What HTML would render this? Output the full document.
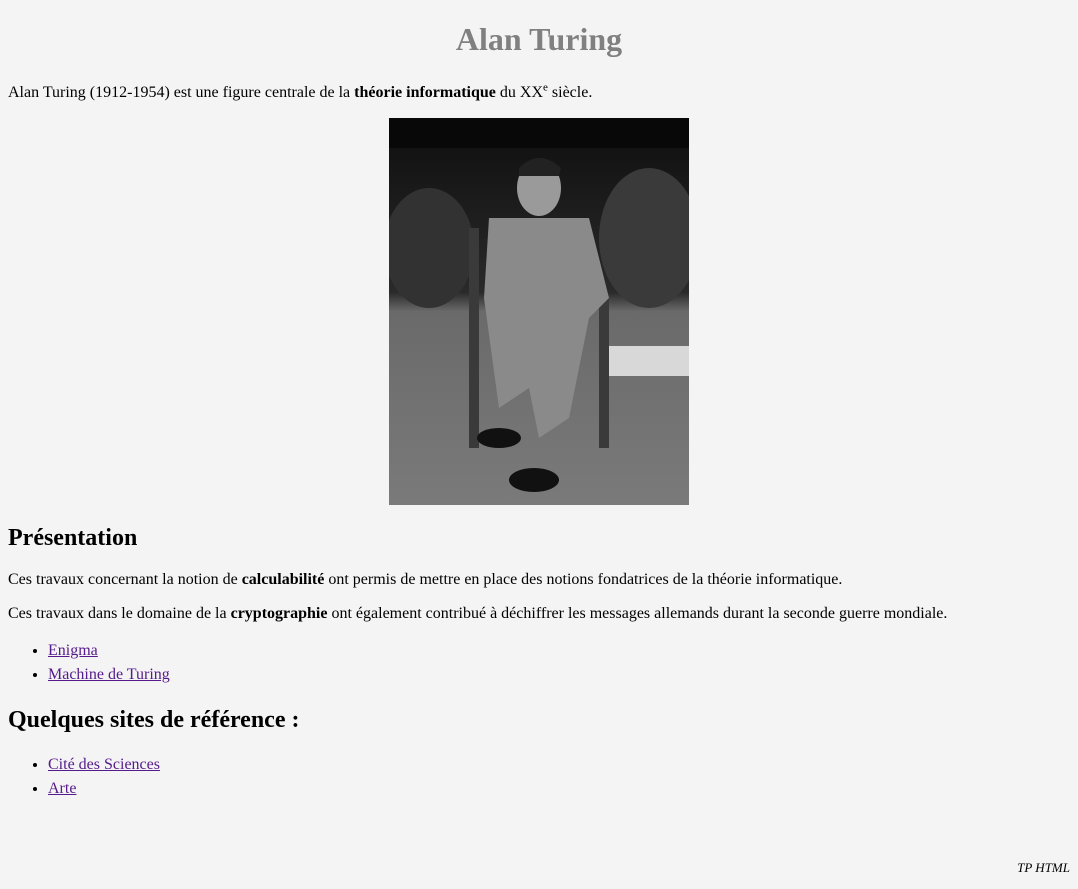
<!DOCTYPE html>
<html><head><meta charset="utf-8">
<style>
html,body{margin:0;padding:0;background:#f4f4f4;}
html{overflow:hidden;height:889px;}
body{padding:8px;font-family:"Liberation Serif",serif;font-size:16px;color:#000;height:850px;position:relative;}
h1{text-align:center;color:#808080;font-size:32px;margin:13px 0 0;line-height:37px;}
p{margin:16px 0;line-height:18px;}
h2{font-size:24px;margin:19px 0;line-height:28px;}
ul{margin:16px 0;padding-left:40px;}
li{line-height:24px;}
a{color:#551a8b;}
.img{display:block;margin:0 auto;width:300px;height:387px;}
.foot{position:absolute;right:8px;top:860px;font-style:italic;font-size:13px;}
sup{font-size:11px;line-height:0;}
</style></head><body>
<h1>Alan Turing</h1>
<p style="margin-top:26px;margin-bottom:16px">Alan Turing (1912-1954) est une figure centrale de la <b>théorie informatique</b> du XX<sup>e</sup> siècle.</p>
<svg class="img" viewBox="0 0 300 387" xmlns="http://www.w3.org/2000/svg">
<defs><linearGradient id="g" x1="0" y1="0" x2="0" y2="1">
<stop offset="0" stop-color="#0e0e0e"/><stop offset="0.45" stop-color="#2a2a2a"/><stop offset="0.5" stop-color="#6a6a6a"/><stop offset="1" stop-color="#7a7a7a"/></linearGradient></defs>
<rect width="300" height="387" fill="url(#g)"/>
<rect x="0" y="0" width="300" height="30" fill="#080808"/>
<ellipse cx="260" cy="120" rx="50" ry="70" fill="#3a3a3a"/>
<ellipse cx="40" cy="130" rx="45" ry="60" fill="#323232"/>
<rect x="220" y="228" width="80" height="30" fill="#d8d8d8"/>
<rect x="80" y="110" width="10" height="220" fill="#3a3a3a"/>
<rect x="210" y="180" width="10" height="150" fill="#3a3a3a"/>
<path d="M100 100 L200 100 L220 180 L200 200 L180 300 L150 320 L140 270 L110 290 L95 180 Z" fill="#8a8a8a"/>
<ellipse cx="150" cy="70" rx="22" ry="28" fill="#9a9a9a"/>
<path d="M130 50 Q150 30 172 50 L170 58 L130 58Z" fill="#222"/>
<ellipse cx="110" cy="320" rx="22" ry="10" fill="#111"/>
<ellipse cx="145" cy="362" rx="25" ry="12" fill="#111"/>
</svg>
<h2>Présentation</h2>
<p>Ces travaux concernant la notion de <b>calculabilité</b> ont permis de mettre en place des notions fondatrices de la théorie informatique.</p>
<p>Ces travaux dans le domaine de la <b>cryptographie</b> ont également contribué à déchiffrer les messages allemands durant la seconde guerre mondiale.</p>
<ul><li><a href="#">Enigma</a></li><li><a href="#">Machine de Turing</a></li></ul>
<h2>Quelques sites de référence :</h2>
<ul><li><a href="#">Cité des Sciences</a></li><li><a href="#">Arte</a></li></ul>
<div class="foot">TP HTML</div>
</body></html>
